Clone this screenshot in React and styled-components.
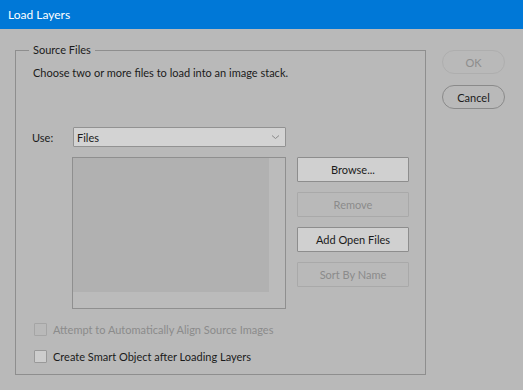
import React from "react";
import styled, { createGlobalStyle } from "styled-components";

const Global = createGlobalStyle`
  html, body { margin: 0; padding: 0; background: #b9b9b9; }
  body { font-family: Lato, "Open Sans", sans-serif; font-size: 11px; color: #1b1b1b; overflow: hidden; }
`;

const Dialog = styled.div`
  width: 523px;
  height: 390px;
  background: #b9b9b9;
  display: flex;
  flex-direction: column;
`;

const TitleBar = styled.div`
  height: 29px;
  background: #0078d7;
  color: #ffffff;
  display: flex;
  align-items: center;
  padding-left: 8px;
  font-size: 12px;
`;

const Body = styled.div`
  display: flex;
  padding: 21px 0 0 15px;
  gap: 16px;
`;

const Group = styled.div`
  position: relative;
  width: 411px;
  height: 325px;
  box-sizing: border-box;
  border: 1px solid #8e8e8e;
  padding: 14px 0 0 16px;
  display: flex;
  flex-direction: column;
`;

const Legend = styled.span`
  position: absolute;
  top: -9px;
  left: 13px;
  padding: 0 4px;
  background: #b9b9b9;
  line-height: 16px;
`;

const Description = styled.div`
  line-height: 16px;
  padding-left: 1px;
`;

const UseRow = styled.div`
  display: flex;
  align-items: center;
  margin-top: 46px;
  height: 20px;
`;

const Label = styled.span`
  width: 41px;
`;

const Select = styled.div`
  width: 213px;
  height: 20px;
  box-sizing: border-box;
  border: 1px solid #929292;
  background: #d3d3d3;
  border-radius: 1px;
  display: flex;
  align-items: center;
  justify-content: space-between;
  padding: 0 5px 0 3px;
`;

const ListRow = styled.div`
  display: flex;
  gap: 11px;
  margin-top: 10px;
  margin-left: 40px;
`;

const ListBox = styled.div`
  width: 214px;
  height: 152px;
  box-sizing: border-box;
  border: 1px solid #8f8f8f;
  display: grid;
  grid-template-columns: 1fr 16px;
  grid-template-rows: 1fr 16px;
  background: #bbbbbb;
`;

const ListArea = styled.div`
  background: #b1b1b1;
`;

const ButtonColumn = styled.div`
  display: flex;
  flex-direction: column;
  gap: 10px;
  width: 112px;
`;

const Button = styled.div`
  height: 25px;
  box-sizing: border-box;
  border: 1px solid ${(p) => (p.disabled ? "#a9a9a9" : "#8d8d8d")};
  background: ${(p) => (p.disabled ? "#b9b9b9" : "#d0d0d0")};
  color: ${(p) => (p.disabled ? "#8b8b8b" : "#1b1b1b")};
  border-radius: 1px;
  display: flex;
  align-items: center;
  justify-content: center;
`;

const Checks = styled.div`
  display: flex;
  flex-direction: column;
  gap: 13px;
  margin-top: 13px;
  margin-left: 2px;
`;

const CheckRow = styled.div`
  display: flex;
  align-items: center;
  gap: 6px;
  height: 14px;
  color: ${(p) => (p.disabled ? "#8b8b8b" : "#1b1b1b")};
`;

const Box = styled.span`
  width: 13px;
  height: 13px;
  box-sizing: border-box;
  border: 1px solid ${(p) => (p.disabled ? "#a5a5a5" : "#999999")};
  background: ${(p) => (p.disabled ? "#b9b9b9" : "#cdcdcd")};
  border-radius: 1px;
`;

const SideColumn = styled.div`
  display: flex;
  flex-direction: column;
  gap: 11px;
`;

const Pill = styled.div`
  width: 63px;
  height: 24px;
  box-sizing: border-box;
  border: 1px solid ${(p) => (p.disabled ? "#aeaeae" : "#8a8a8a")};
  border-radius: 12px;
  display: flex;
  align-items: center;
  justify-content: center;
  color: ${(p) => (p.disabled ? "#8d8d8d" : "#1b1b1b")};
`;

const Chevron = () => (
  <svg width="9" height="6" viewBox="0 0 9 6">
    <path d="M1 1.5 L4.5 4.5 L8 1.5" fill="none" stroke="#8a8a8a" strokeWidth="1" />
  </svg>
);

export default function App() {
  return (
    <Dialog>
      <Global />
      <TitleBar>Load Layers</TitleBar>
      <Body>
        <Group>
          <Legend>Source Files</Legend>
          <Description>Choose two or more files to load into an image stack.</Description>
          <UseRow>
            <Label>Use:</Label>
            <Select>
              <span>Files</span>
              <Chevron />
            </Select>
          </UseRow>
          <ListRow>
            <ListBox>
              <ListArea />
            </ListBox>
            <ButtonColumn>
              <Button>Browse...</Button>
              <Button disabled>Remove</Button>
              <Button>Add Open Files</Button>
              <Button disabled>Sort By Name</Button>
            </ButtonColumn>
          </ListRow>
          <Checks>
            <CheckRow disabled>
              <Box disabled />
              Attempt to Automatically Align Source Images
            </CheckRow>
            <CheckRow>
              <Box />
              Create Smart Object after Loading Layers
            </CheckRow>
          </Checks>
        </Group>
        <SideColumn>
          <Pill disabled>OK</Pill>
          <Pill>Cancel</Pill>
        </SideColumn>
      </Body>
    </Dialog>
  );
}
